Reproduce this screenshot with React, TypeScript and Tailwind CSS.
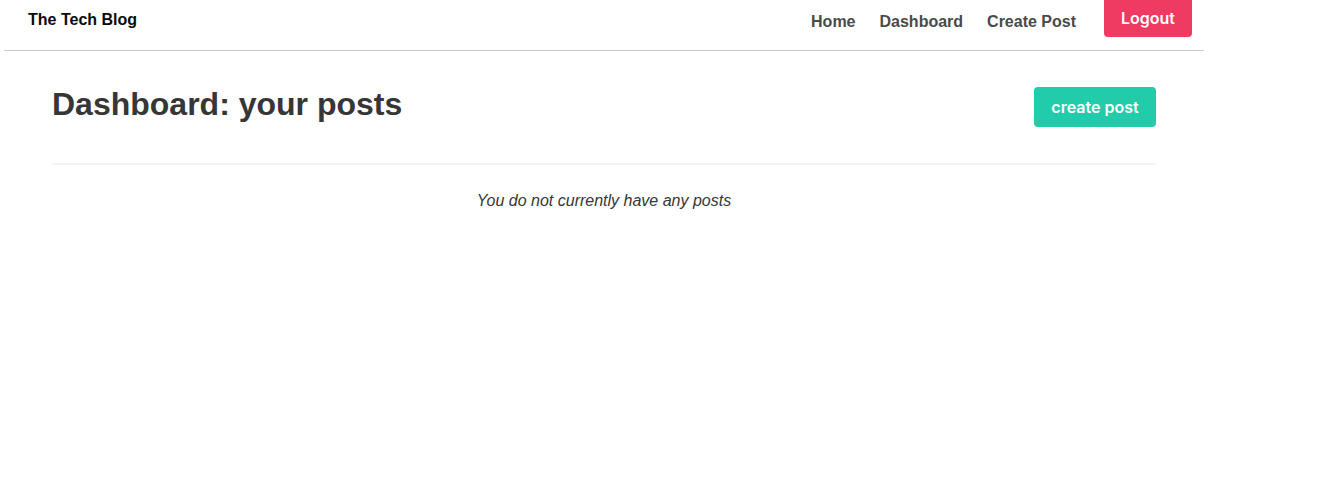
import React from 'react';

const NavLink: React.FC<{ label: string }> = ({ label }) => (
  <a href="#" className="text-[16px] font-bold text-[#4a4a4a] leading-none">
    {label}
  </a>
);

export default function App() {
  return (
    <div className="w-full min-h-screen bg-white font-['Liberation_Sans',Arial,sans-serif]">
      {/* Header */}
      <header className="ml-[4px] w-[1200px] h-[51px] border-b border-[#c8c8c8] flex items-start justify-between pl-[24px] pr-[12px]">
        <h1 className="mt-[11px] text-[16px] font-bold text-[#0a0a0a] leading-[18px]">The Tech Blog</h1>
        <nav className="flex items-start">
          <div className="flex gap-[24px] mt-[14px] mr-[28px]">
            <NavLink label="Home" />
            <NavLink label="Dashboard" />
            <NavLink label="Create Post" />
          </div>
          <button className="-mt-[3px] h-[40px] w-[88px] rounded-[4px] bg-[#ef3a61] text-white text-[16px] font-semibold font-['Inter',sans-serif] leading-none pt-[2px]">
            Logout
          </button>
        </nav>
      </header>

      {/* Main */}
      <main className="ml-[52px] w-[1104px]">
        <div className="flex items-start justify-between mt-[36px]">
          <h2 className="-mt-[1px] text-[32px] font-bold text-[#363636] leading-[36px]">Dashboard: your posts</h2>
          <button className="h-[40px] w-[122px] rounded-[4px] bg-[#22cbaa] text-white text-[16px] font-semibold font-['Inter',sans-serif]">
            create post
          </button>
        </div>
        <hr className="mt-[36px] border-0 h-[2px] bg-[#f3f3f3]" />
        <p className="mt-[26px] text-center italic text-[16px] text-[#363636] leading-[20px]">
          You do not currently have any posts
        </p>
      </main>
    </div>
  );
}
